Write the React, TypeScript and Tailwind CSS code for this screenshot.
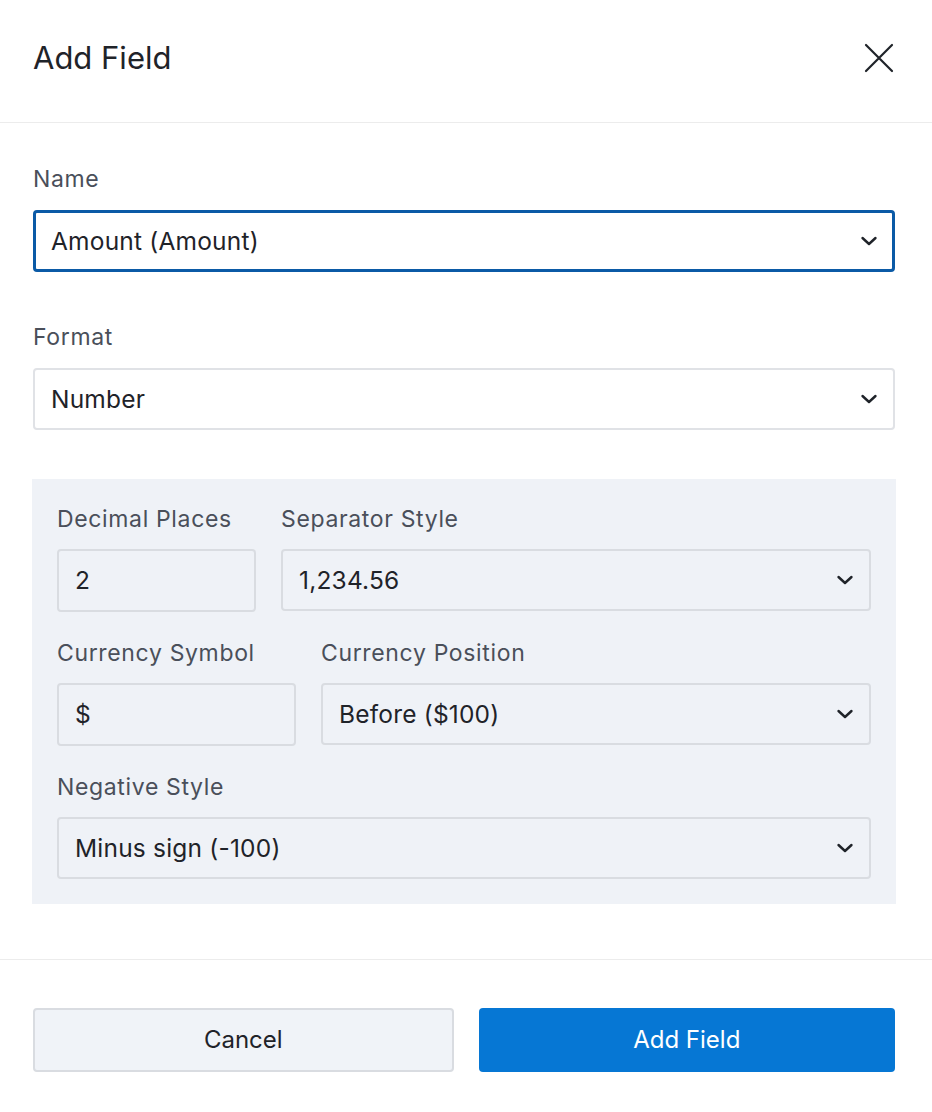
import React from "react";

function Chevron() {
  return (
    <svg width="18" height="18" viewBox="0 0 18 18" fill="none" className="shrink-0">
      <path d="M2.5 6 L9 12 L15.5 6" stroke="#1f2329" strokeWidth="2.4" strokeLinecap="round" strokeLinejoin="round" />
    </svg>
  );
}

function Label({ children }: { children: React.ReactNode }) {
  return <div className="text-[23px] leading-[28px] text-[#4a4f5a] tracking-[0.65px] whitespace-nowrap">{children}</div>;
}

function Select({ value, focused, panel }: { value: string; focused?: boolean; panel?: boolean }) {
  return (
    <div
      className={
        "flex items-center justify-between h-[62px] rounded-[4px] text-[24.5px] text-[#1f2329] tracking-[0.2px] " +
        (focused
          ? "border-[3px] border-[#0b5aa6] bg-white pl-[15px] pr-[14px]"
          : panel
          ? "border-2 border-[#d9dce1] bg-[#eff2f7] pl-[16px] pr-[15px]"
          : "border-2 border-[#e0e2e6] bg-white pl-[16px] pr-[15px]")
      }
    >
      <span>{value}</span>
      <Chevron />
    </div>
  );
}

function Input({ value }: { value: string }) {
  return (
    <div className="flex items-center h-[63px] pl-[16px] rounded-[4px] border-2 border-[#d9dce1] bg-[#eff2f7] text-[24.5px] text-[#1f2329]">
      {value}
    </div>
  );
}

export default function App() {
  return (
    <div className="w-[932px] h-[1112px] bg-white flex flex-col" style={{ fontFamily: "Inter, 'Noto Sans', sans-serif" }}>
      <div className="h-[123px] border-b border-[#ececec] flex items-center justify-between pl-[33px] pr-[37px] pb-[6px]">
        <h1 className="text-[31px] text-[#1f2329]">Add Field</h1>
        <svg width="32" height="32" viewBox="0 0 32 32" fill="none">
          <path d="M3 3 L29 29 M29 3 L3 29" stroke="#1f2329" strokeWidth="2.2" strokeLinecap="round" />
        </svg>
      </div>
      <div className="pl-[33px] pr-[37px] pt-[42px] pb-[55px] flex flex-col border-b border-[#ececec]">
        <Label>Name</Label>
        <div className="mt-[17px]">
          <Select value="Amount (Amount)" focused />
        </div>
        <div className="mt-[51px]">
          <Label>Format</Label>
        </div>
        <div className="mt-[17px]">
          <Select value="Number" />
        </div>
        <div className="mt-[49px] -mx-px bg-[#eff2f7] pt-[26px] pb-[25px] px-[25px] flex flex-col">
          <div className="flex gap-[25px]">
            <div className="w-[199px] flex flex-col gap-[16px]">
              <Label>Decimal Places</Label>
              <Input value="2" />
            </div>
            <div className="flex-1 flex flex-col gap-[16px]">
              <Label>Separator Style</Label>
              <Select value="1,234.56" panel />
            </div>
          </div>
          <div className="flex gap-[25px] mt-[27px]">
            <div className="w-[239px] flex flex-col gap-[16px]">
              <Label>Currency Symbol</Label>
              <Input value="$" />
            </div>
            <div className="flex-1 flex flex-col gap-[16px]">
              <Label>Currency Position</Label>
              <Select value="Before ($100)" panel />
            </div>
          </div>
          <div className="flex flex-col gap-[16px] mt-[27px]">
            <Label>Negative Style</Label>
            <Select value="Minus sign (-100)" panel />
          </div>
        </div>
      </div>
      <div className="pl-[33px] pr-[37px] pt-[48px] flex gap-[25px]">
        <button className="flex-1 h-[64px] rounded-[4px] border-2 border-[#d9dce1] bg-[#f0f3f8] text-[24px] text-[#1f2329]">
          Cancel
        </button>
        <button className="flex-1 h-[64px] rounded-[4px] bg-[#0677d4] text-[24px] text-white">
          Add Field
        </button>
      </div>
    </div>
  );
}
